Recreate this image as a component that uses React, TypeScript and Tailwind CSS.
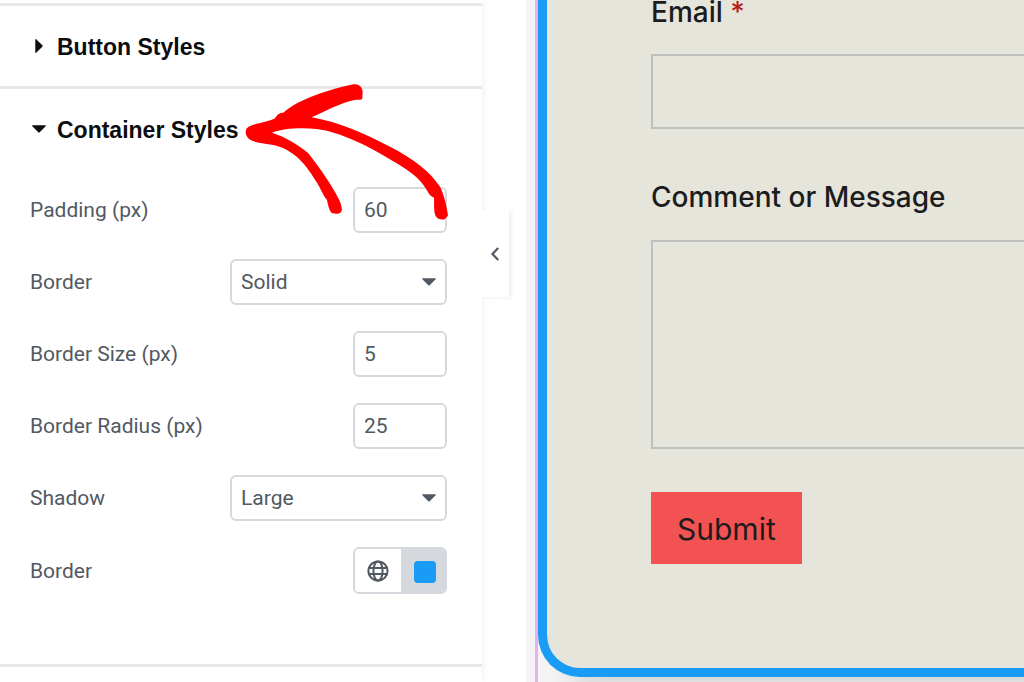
import React from 'react'

type Option = { id: string; label: string; value: string; kind: 'input' | 'select' }

const options: Option[] = [
  { id: 'padding', label: 'Padding (px)', value: '60', kind: 'input' },
  { id: 'border-style', label: 'Border', value: 'Solid', kind: 'select' },
  { id: 'border-size', label: 'Border Size (px)', value: '5', kind: 'input' },
  { id: 'border-radius', label: 'Border Radius (px)', value: '25', kind: 'input' },
  { id: 'shadow', label: 'Shadow', value: 'Large', kind: 'select' },
]

const selectChoices: Record<string, string[]> = {
  'border-style': ['None', 'Solid', 'Dashed', 'Dotted'],
  shadow: ['None', 'Small', 'Medium', 'Large'],
}

const Caret: React.FC<{ className?: string }> = ({ className = '' }) => (
  <svg viewBox="0 0 14 8" className={`h-2 w-3.5 ${className}`} fill="currentColor" aria-hidden="true">
    <path d="M.8.3h12.400c.7 0 .9.500.5.900L7.700 7.300a1 1 0 0 1-1.400 0L.3 1.200C-.1.8.1.3.8.3z" />
  </svg>
)

const GlobeIcon = () => (
  <svg viewBox="0 0 22 22" className="size-[22px]" fill="none" stroke="currentColor" strokeWidth="2" aria-hidden="true">
    <circle cx="11" cy="11" r="9.6" />
    <ellipse cx="11" cy="11" rx="4.6" ry="9.6" />
    <path d="M2.400 7.900h17.200M2.400 14.100h17.200" />
  </svg>
)

const SectionHeader: React.FC<{ title: string; open?: boolean }> = ({ title, open = false }) => (
  <button
    type="button"
    aria-expanded={open}
    className="flex h-20 w-full items-center pl-8 text-left font-['Liberation_Sans',Arial,sans-serif] text-[23px] font-bold text-[#0c0d0e]"
  >
    <span className="flex w-[25px]">
      {open ? (
        <Caret />
      ) : (
        <svg viewBox="0 0 8 14" className="ml-[3px] h-3.5 w-2" fill="currentColor" aria-hidden="true">
          <path d="M.3.8v12.400c0 .7.500.900.900.500L7.300 7.700a1 1 0 0 0 0-1.400L1.200.3C.8-.1.3.1.3.8z" />
        </svg>
      )}
    </span>
    <span className="pt-0.5">{title}</span>
  </button>
)

const OptionRow: React.FC<{ option: Option }> = ({ option }) => {
  const { id, label, value, kind } = option

  return (
    <div className="flex items-center justify-between">
      <label htmlFor={id} className="pt-0.5">
        {label}
      </label>
      {kind === 'input' ? (
        <input
          id={id}
          type="text"
          defaultValue={value}
          className="h-[46px] w-[94px] rounded-md border-2 border-[#d5d8dc] bg-white px-[9px]"
        />
      ) : (
        <div className="relative">
          <select
            id={id}
            defaultValue={value}
            className="h-[46px] w-[217px] appearance-none rounded-md border-2 border-[#d5d8dc] bg-white px-[9px] pt-0.5"
          >
            {selectChoices[id].map((choice) => (
              <option key={choice}>{choice}</option>
            ))}
          </select>
          <Caret className="pointer-events-none absolute top-[19px] right-[11px]" />
        </div>
      )}
    </div>
  )
}

const ScribbleArrow = () => (
  <svg viewBox="0 0 720 510" className="pointer-events-none absolute top-[70px] left-[230px] z-20 h-[170px] w-[240px]" fill="#f00" aria-hidden="true">
    <path d="M48 180C55 160 110 160 135 145C140 135 148 127 160 128C210 85 300 58 370 43C385 40 397 50 398 65L397 85C395 92 385 88 370 91C330 100 290 122 245 142C330 157 400 190 480 230C550 265 602 307 630 350C643 375 650 410 654 435C652 442 648 442 645 447C635 451 622 448 617 438C610 425 613 400 612 383C602 380 597 372 590 360C570 325 540 305 500 280C420 230 330 185 260 177C210 172 160 175 126 188C170 202 205 225 235 250C270 295 305 345 325 385C333 400 337 415 335 422C332 432 320 433 305 429C297 420 294 405 291 390C280 378 275 362 262 340C230 285 190 235 125 224C90 217 60 218 50 198C46 192 47 185 48 180Z" />
  </svg>
)

const Sidebar = () => (
  <aside className="relative z-10 w-[482px] shrink-0 bg-white pt-[3px] font-[Roboto,sans-serif] text-[21px] text-[#515962] shadow-[0_0_8px_rgba(0,0,0,0.08)]">
    <div className="border-t-[3px] border-[#e6e8ea]">
      <SectionHeader title="Button Styles" />
    </div>
    <div className="border-y-[3px] border-[#e6e8ea] pb-[70px]">
      <SectionHeader title="Container Styles" open />
      <div className="mt-[18px] flex flex-col gap-[26px] pr-[35px] pl-[30px]">
        {options.map((option) => (
          <OptionRow key={option.id} option={option} />
        ))}
        <div className="flex items-center justify-between">
          <span id="border-color" className="pt-0.5">
            Border
          </span>
          <div role="group" aria-labelledby="border-color" className="flex h-[47px] w-[94px] overflow-hidden rounded-md border-2 border-[#d5d8dc]">
            <button type="button" aria-label="Global colors" className="flex w-[46px] items-center justify-center">
              <GlobeIcon />
            </button>
            <button type="button" aria-label="Pick color" className="flex flex-1 items-center justify-center bg-[#d5d8dc] pt-0.5 pl-1">
              <span className="size-[22px] rounded-sm bg-[#1a9bf5]" />
            </button>
          </div>
        </div>
      </div>
    </div>
    <button
      type="button"
      aria-label="Hide panel"
      className="absolute top-[210px] left-full flex h-[87px] w-[27px] items-center justify-center bg-white pr-0.5 shadow-[3px_1px_3px_rgba(0,0,0,0.06)]"
    >
      <svg viewBox="0 0 8 14" className="h-3.5 w-2" fill="none" stroke="currentColor" strokeWidth="2.2" aria-hidden="true">
        <path d="M7.200 1L1.500 7l5.700 6" />
      </svg>
    </button>
    <ScribbleArrow />
  </aside>
)

const FormPreview = () => (
  <main className="min-w-0 flex-1 overflow-hidden bg-[#f3f3f3] pl-[9px] font-[Inter,sans-serif] text-[#1c1c1c]">
    <div className="h-full border-l-[3px] border-[#e8b0f2]">
      <form className="rounded-bl-[42px] border-b-[9px] border-l-[9px] border-[#1a9bf5] bg-[#e5e5dc] pb-[104px] pl-[104px] shadow-[24px_16px_20px_rgba(0,0,0,0.1)]">
        <label htmlFor="email" className="block text-[28px] leading-6 font-medium">
          Email <span className="text-[#b91c1c]">*</span>
        </label>
        <input id="email" type="email" className="mt-[30px] block h-[75px] w-full border-2 border-r-0 border-[#bfbfbf] bg-transparent px-4" />
        <label htmlFor="message" className="mt-14 block text-[28px] leading-6 font-medium">
          Comment or Message
        </label>
        <textarea id="message" className="mt-[31px] block h-[209px] w-full resize-none border-2 border-r-0 border-[#bfbfbf] bg-transparent p-4" />
        <button type="submit" className="mt-[43px] block h-[72px] bg-[#f35252] px-[26px] pt-0.5 text-[30px]">
          Submit
        </button>
      </form>
    </div>
  </main>
)

export default function App() {
  return (
    <div className="flex h-screen overflow-hidden bg-white">
      <Sidebar />
      <div className="w-11 shrink-0" />
      <FormPreview />
    </div>
  )
}
